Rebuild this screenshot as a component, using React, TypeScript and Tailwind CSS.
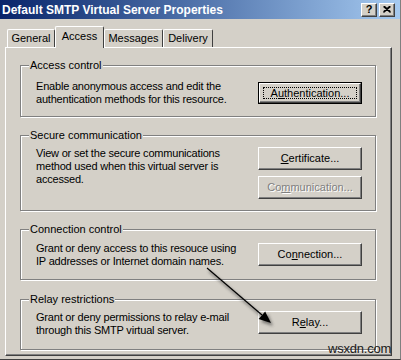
import type { ReactNode } from 'react';

const raised =
  'border border-t-white border-l-white border-r-[#404040] border-b-[#404040] shadow-[inset_-1px_-1px_0_#808080]';

function Button({ children, disabled, isDefault }: { children: ReactNode; disabled?: boolean; isDefault?: boolean }) {
  const face = (
    <div
      className={`relative flex h-full w-full items-center justify-center bg-[#d4d0c8] ${raised} ${
        disabled ? 'text-[#808080] [text-shadow:1px_1px_0_#fff]' : 'text-black'
      }`}
    >
      {isDefault && <div className="absolute inset-[3px] border border-dotted border-black" />}
      <span className="leading-[13px]">{children}</span>
    </div>
  );
  if (isDefault) {
    return <div className="h-[22px] w-[104px] border border-black">{face}</div>;
  }
  return <div className="h-[23px] w-[104px]">{face}</div>;
}

function GroupBox({
  label,
  height,
  top,
  textPad,
  btnPad,
  text,
  children,
}: {
  label: string;
  height: number;
  top: string;
  textPad: string;
  btnPad: string;
  text: ReactNode;
  children: ReactNode;
}) {
  return (
    <div
      className={`relative flex w-[356px] justify-between border border-[#808080] shadow-[inset_1px_1px_0_#fff,1px_1px_0_#fff] ${top}`}
      style={{ height }}
    >
      <span className="absolute left-[8px] top-[-7px] bg-[#d4d0c8] px-[1px] leading-[13px]">{label}</span>
      <div className={`whitespace-nowrap pl-[15px] leading-[13px] tracking-[-0.2px] ${textPad}`}>{text}</div>
      <div className={`mr-[13px] flex flex-col gap-[6px] ${btnPad}`}>{children}</div>
    </div>
  );
}

function Tab({ label, active, width }: { label: string; active?: boolean; width: string }) {
  if (active) {
    return (
      <div
        className={`relative z-10 -mb-px flex h-[22px] items-start justify-center rounded-t-[2px] border-l border-t border-r border-l-white border-t-white border-r-[#404040] bg-[#d4d0c8] pt-[3px] leading-[13px] ${width}`}
      >
        {label}
      </div>
    );
  }
  return (
    <div
      className={`flex h-[18px] items-center justify-center rounded-t-[2px] border-l border-t border-r border-l-white border-t-white border-r-[#404040] leading-[13px] ${width}`}
    >
      {label}
    </div>
  );
}

export default function App() {
  return (
    <div className="relative h-[360px] w-[401px] overflow-hidden border-b border-r border-b-[#404040] border-r-[#808080] bg-[#d4d0c8] font-['Liberation_Sans',Arial,sans-serif] text-[11px] text-black">
      {/* title bar */}
      <div className="flex h-[19px] items-center justify-between bg-linear-to-r from-[#0a246a] to-[#a6caf0] pl-[2px] pr-[5px]">
        <span className="text-[12px] font-bold leading-[14px] text-white">Default SMTP Virtual Server Properties</span>
        <div className="flex gap-[2px]">
          <div className={`flex h-[14px] w-[16px] items-center justify-center bg-[#d4d0c8] text-[11px] font-bold leading-none ${raised}`}>
            ?
          </div>
          <div className={`flex h-[14px] w-[16px] items-center justify-center bg-[#d4d0c8] ${raised}`}>
            <svg width="8" height="7" viewBox="0 0 8 7">
              <path d="M0.5 0.5 L7.5 6.5 M1.5 0.5 L7.5 5.7 M7.5 0.5 L0.5 6.5 M6.5 0.5 L0.5 5.7" stroke="#000" strokeWidth="1.3" />
            </svg>
          </div>
        </div>
      </div>

      {/* tabs */}
      <div className="mt-[7px] flex h-[21px] items-end pl-[7px]">
        <Tab label="General" width="w-[48px]" />
        <Tab label="Access" width="w-[49px]" active />
        <Tab label="Messages" width="w-[59px]" />
        <Tab label="Delivery" width="w-[50px]" />
      </div>

      {/* tab panel */}
      <div className={`ml-[5px] h-[309px] w-[387px] pl-[14px] pt-[17px] ${raised}`}>
        <GroupBox
          label="Access control"
          height={52}
          top=""
          textPad="pt-[14px]"
          btnPad="pt-[16px]"
          text={
            <>
              Enable anonymous access and edit the
              <br />
              authentication methods for this resource.
            </>
          }
        >
          <Button isDefault>
            A<span className="underline">u</span>thentication...
          </Button>
        </GroupBox>

        <GroupBox
          label="Secure communication"
          height={76}
          top="mt-[18px]"
          textPad="pt-[11px]"
          btnPad="pt-[11px]"
          text={
            <>
              View or set the secure communications
              <br />
              method used when this virtual server is
              <br />
              accessed.
            </>
          }
        >
          <Button>
            <span className="underline">C</span>ertificate...
          </Button>
          <Button disabled>
            Co<span className="underline">m</span>munication...
          </Button>
        </GroupBox>

        <GroupBox
          label="Connection control"
          height={51}
          top="mt-[18px]"
          textPad="pt-[12px]"
          btnPad="pt-[13px]"
          text={
            <>
              Grant or deny access to this resouce using
              <br />
              IP addresses or Internet domain names.
            </>
          }
        >
          <Button>
            Co<span className="underline">n</span>nection...
          </Button>
        </GroupBox>

        <GroupBox
          label="Relay restrictions"
          height={51}
          top="mt-[19px]"
          textPad="pt-[11px]"
          btnPad="pt-[11px]"
          text={
            <>
              Grant or deny permissions to relay e-mail
              <br />
              through this SMTP virtual server.
            </>
          }
        >
          <Button>
            R<span className="underline">e</span>lay...
          </Button>
        </GroupBox>
      </div>

      {/* annotation arrow drawn over the dialog */}
      <svg className="pointer-events-none absolute left-0 top-0" width="401" height="360">
        <defs>
          <filter id="blur" x="-20%" y="-20%" width="140%" height="140%">
            <feGaussianBlur stdDeviation="1.6" />
          </filter>
        </defs>
        <g filter="url(#blur)" opacity="0.55">
          <line x1="209" y1="271" x2="264" y2="318" stroke="#333" strokeWidth="2" />
          <polygon points="273,326 261,322 268,314" fill="#333" />
        </g>
        <line x1="207" y1="268" x2="262" y2="315" stroke="#000" strokeWidth="1.2" />
        <polygon points="271,323 258.6,319 265.2,311.4" fill="#000" />
      </svg>

      <span className="absolute left-[328px] top-[341px] text-[13px] leading-[15px] tracking-[-0.2px] text-[#1a1a1a]">
        wsxdn.com
      </span>
    </div>
  );
}
